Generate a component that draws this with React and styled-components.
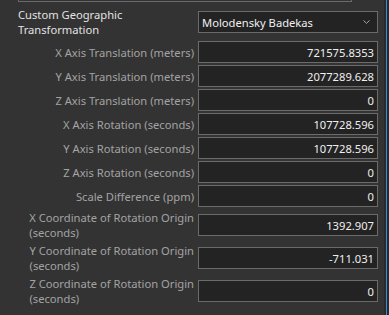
import React from "react";
import styled, { createGlobalStyle } from "styled-components";

const Global = createGlobalStyle`
  html, body { margin: 0; padding: 0; background: #333333; }
  body { font-family: "Noto Sans", "Open Sans", sans-serif; }
`;

const Frame = styled.div`
  width: 389px;
  height: 315px;
  display: flex;
  overflow: hidden;
  background: #333333;
`;

const Main = styled.div`
  flex: 0 0 384px;
  display: flex;
  flex-direction: column;
  padding-left: 18px;
  padding-right: 6px;
  box-sizing: border-box;
`;

const Edge = styled.div`
  flex: 0 0 5px;
  display: flex;
`;

const EdgeStrip = styled.div`
  width: ${(p) => p.$w}px;
  background: ${(p) => p.$c};
`;

const PrevBox = styled.div`
  width: 334px;
  height: 2px;
  box-sizing: border-box;
  border: 1px solid #6a6a6a;
  border-top: none;
  margin-bottom: 4px;
`;

const Rows = styled.div`
  display: flex;
  flex-direction: column;
  gap: 2px;
`;

const Row = styled.div`
  display: grid;
  grid-template-columns: 176px 180px;
  column-gap: 4px;
  align-items: center;
  min-height: ${(p) => (p.$tall ? 30 : 22)}px;
  margin-bottom: ${(p) => (p.$first ? 2 : 0)}px;
`;

const LabelCell = styled.div`
  text-align: ${(p) => (p.$left ? "left" : "right")};
  font-size: 11.2px;
  line-height: 15px;
  padding-top: 1px;
  color: ${(p) => (p.$strong ? "#e2e2e2" : "#a3a3a3")};
  white-space: nowrap;
`;

const LabelBlock = styled.span`
  display: inline-block;
  text-align: left;
`;

const Field = styled.div`
  height: 22px;
  box-sizing: border-box;
  border: 1px solid #6b6b6b;
  background: #232323;
  color: #f0f0f0;
  font-size: 11.2px;
  display: flex;
  align-items: center;
  justify-content: ${(p) => (p.$select ? "space-between" : "flex-end")};
  padding: 1px 3px 0 3px;
`;

const Chevron = styled.svg`
  width: 7px;
  height: 4px;
  margin-right: 4px;
  margin-top: -1px;
`;

const rows = [
  ["X Axis Translation (meters)", "721575.8353"],
  ["Y Axis Translation (meters)", "2077289.628"],
  ["Z Axis Translation (meters)", "0"],
  ["X Axis Rotation (seconds)", "107728.596"],
  ["Y Axis Rotation (seconds)", "107728.596"],
  ["Z Axis Rotation (seconds)", "0"],
  ["Scale Difference (ppm)", "0"],
  [["X Coordinate of Rotation Origin", "(seconds)"], "1392.907"],
  [["Y Coordinate of Rotation Origin", "(seconds)"], "-711.031"],
  [["Z Coordinate of Rotation Origin", "(seconds)"], "0"],
];

export default function App() {
  return (
    <>
      <Global />
      <Frame>
        <Main>
          <PrevBox />
          <Rows>
            <Row $tall $first>
              <LabelCell $left $strong>
                Custom Geographic
                <br />
                Transformation
              </LabelCell>
              <Field $select>
                <span>Molodensky Badekas</span>
                <Chevron viewBox="0 0 7 4">
                  <path d="M0.5 0.5 L3.5 3.3 L6.5 0.5" fill="none" stroke="#a8a8a8" strokeWidth="1" />
                </Chevron>
              </Field>
            </Row>
            {rows.map(([label, value], i) => {
              const tall = Array.isArray(label);
              return (
                <Row key={i} $tall={tall}>
                  <LabelCell>
                    {tall ? (
                      <LabelBlock>
                        {label[0]}
                        <br />
                        {label[1]}
                      </LabelBlock>
                    ) : (
                      label
                    )}
                  </LabelCell>
                  <Field>{value}</Field>
                </Row>
              );
            })}
          </Rows>
        </Main>
        <Edge>
          <EdgeStrip $w={2} $c="#2a2a2a" />
          <EdgeStrip $w={1} $c="#2b8de3" />
          <EdgeStrip $w={2} $c="#2a2a2a" />
        </Edge>
      </Frame>
    </>
  );
}
